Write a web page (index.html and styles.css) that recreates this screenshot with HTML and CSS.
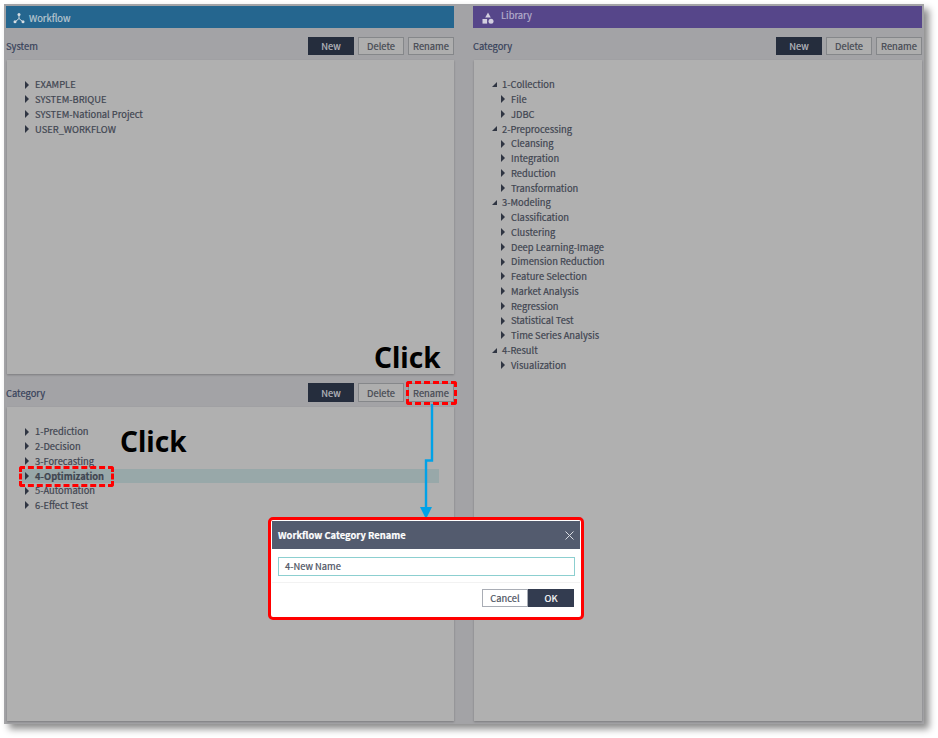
FILE: index.html
```
<!DOCTYPE html>
<html lang="en">
<head>
    <meta charset="UTF-8">
    <title>Workflow Category Rename</title>
    <link rel="stylesheet" href="styles.css">
</head>
<body>
    <div class="shell">
        <div class="column">
            <div class="title-bar workflow-bar">
                <svg class="title-icon" width="12" height="12" viewBox="0 0 12 12"><path d="M6 2.5V6.5L2 10M6 6.5L10 10" fill="none" stroke="#d5dde3" stroke-width="1"/><circle cx="6" cy="2.4" r="1.5" fill="#d5dde3"/><circle cx="2" cy="9.8" r="1.5" fill="#d5dde3"/><circle cx="10" cy="9.8" r="1.5" fill="#d5dde3"/></svg>
                <span>Workflow</span>
            </div>
            <div class="section-head">
                <span class="section-name">System</span>
                <button class="btn btn-dark">New</button>
                <button class="btn">Delete</button>
                <button class="btn">Rename</button>
            </div>
            <ul class="tree">
                <li class="row"><i class="arrow"></i>EXAMPLE</li>
                <li class="row"><i class="arrow"></i>SYSTEM-BRIQUE</li>
                <li class="row"><i class="arrow"></i>SYSTEM-National Project</li>
                <li class="row"><i class="arrow"></i>USER_WORKFLOW</li>
            </ul>
            <div class="section-head second">
                <span class="section-name">Category</span>
                <button class="btn btn-dark">New</button>
                <button class="btn">Delete</button>
                <button class="btn">Rename</button>
            </div>
            <ul class="tree">
                <li class="row"><i class="arrow"></i>1-Prediction</li>
                <li class="row"><i class="arrow"></i>2-Decision</li>
                <li class="row"><i class="arrow"></i>3-Forecasting</li>
                <li class="row selected"><i class="arrow"></i>4-Optimization</li>
                <li class="row"><i class="arrow"></i>5-Automation</li>
                <li class="row"><i class="arrow"></i>6-Effect Test</li>
            </ul>
        </div>

        <div class="column">
            <div class="title-bar library-bar">
                <svg class="title-icon" width="12" height="12" viewBox="0 0 12 12"><path d="M6 0.5L8.8 5.5H3.2Z" fill="#d3cfe0"/><rect x="0.5" y="7" width="4.6" height="4.6" fill="#d3cfe0"/><circle cx="9" cy="9.3" r="2.5" fill="#d3cfe0"/></svg>
                <span>Library</span>
            </div>
            <div class="section-head">
                <span class="section-name">Category</span>
                <button class="btn btn-dark">New</button>
                <button class="btn">Delete</button>
                <button class="btn">Rename</button>
            </div>
            <ul class="tree">
                <li class="row open"><i class="arrow-open"></i>1-Collection</li>
                <li class="row child"><i class="arrow"></i>File</li>
                <li class="row child"><i class="arrow"></i>JDBC</li>
                <li class="row open"><i class="arrow-open"></i>2-Preprocessing</li>
                <li class="row child"><i class="arrow"></i>Cleansing</li>
                <li class="row child"><i class="arrow"></i>Integration</li>
                <li class="row child"><i class="arrow"></i>Reduction</li>
                <li class="row child"><i class="arrow"></i>Transformation</li>
                <li class="row open"><i class="arrow-open"></i>3-Modeling</li>
                <li class="row child"><i class="arrow"></i>Classification</li>
                <li class="row child"><i class="arrow"></i>Clustering</li>
                <li class="row child"><i class="arrow"></i>Deep Learning-Image</li>
                <li class="row child"><i class="arrow"></i>Dimension Reduction</li>
                <li class="row child"><i class="arrow"></i>Feature Selection</li>
                <li class="row child"><i class="arrow"></i>Market Analysis</li>
                <li class="row child"><i class="arrow"></i>Regression</li>
                <li class="row child"><i class="arrow"></i>Statistical Test</li>
                <li class="row child"><i class="arrow"></i>Time Series Analysis</li>
                <li class="row open"><i class="arrow-open"></i>4-Result</li>
                <li class="row child"><i class="arrow"></i>Visualization</li>
            </ul>
        </div>
    </div>

    <!-- annotations drawn over the screen -->
    <div class="click-label click-rename">Click</div>
    <div class="click-label click-row">Click</div>
    <div class="dash-box dash-rename"></div>
    <div class="dash-box dash-row"></div>
    <svg class="connector" width="20" height="116" viewBox="0 0 20 116">
        <path d="M15 0V56.5H9V106" fill="none" stroke="#00a2e8" stroke-width="2.4"/>
        <path d="M3 103H15L9 115Z" fill="#00a2e8"/>
    </svg>

    <div class="modal">
        <div class="modal-head">
            <span>Workflow Category Rename</span>
            <svg width="9" height="9" viewBox="0 0 9 9"><path d="M0.5 0.5L8.5 8.5M8.5 0.5L0.5 8.5" stroke="#d9dce2" stroke-width="1"/></svg>
        </div>
        <div class="modal-body">
            <div class="modal-input">4-New Name</div>
        </div>
        <div class="modal-foot">
            <button class="modal-btn">Cancel</button>
            <button class="modal-btn modal-ok">OK</button>
        </div>
    </div>
</body>
</html>
```

FILE: styles.css
```
html, body {
    margin: 0;
    padding: 0;
}
body {
    width: 938px;
    height: 738px;
    overflow: hidden;
    background-color: #fff;
    font-family: "Noto Sans CJK KR", "Noto Sans", sans-serif;
    font-size: 9.35px;
    -webkit-text-stroke: 0.2px;
    color: #3f4550;
}
.shell {
    position: relative;
    margin: 4px 0 0 4px;
    width: 920px;
    height: 720px;
    box-sizing: border-box;
    padding: 2px 2px 3px 2px;
    display: flex;
    gap: 19px;
    background-color: #a3a3a6;
    box-shadow: 5px 5px 7px rgba(0, 0, 0, 0.45);
}
.column {
    width: 448px;
    display: flex;
    flex-direction: column;
}
.column + .column {
    width: 449px;
}
.title-bar {
    height: 22px;
    flex: none;
    box-sizing: border-box;
    display: flex;
    align-items: center;
    color: #b9c6d0;
}
.workflow-bar {
    background-color: #25668f;
    padding-left: 7px;
    gap: 4px;
    padding-top: 1px;
}
.library-bar {
    background-color: #56468a;
    color: #b5aecb;
    padding-left: 9px;
    padding-bottom: 5px;
    gap: 7px;
}
.title-icon {
    flex: none;
}
.library-bar .title-icon {
    margin-top: 7px;
}
.section-head {
    height: 18px;
    flex: none;
    margin: 9px 0 5px;
    display: flex;
    align-items: center;
    gap: 4px;
}
.section-head.second {
    margin: 9px 0 5px;
    height: 19px;
}
.section-name {
    flex: 1;
    color: #36415a;
}
.btn {
    width: 46px;
    height: 100%;
    padding: 0;
    box-sizing: border-box;
    border: 1px solid #85878a;
    background-color: #aeaeae;
    color: #444851;
    font-family: inherit;
    font-size: 9.35px;
}
.btn-dark {
    background-color: #252d3d;
    border-color: #252d3d;
    color: #b7b9bf;
}
.tree {
    flex: 1;
    list-style: none;
    margin: 0 0 0 1px;
    padding: 17.25px 15px 0 15px;
    background-color: #b0b0b0;
    box-shadow: 0 1px 2px rgba(0, 0, 0, 0.25);
}
.row {
    height: 14.75px;
    line-height: 14.75px;
    display: flex;
    align-items: center;
    padding-left: 3px;
    white-space: nowrap;
}
.row.open {
    padding-left: 3px;
}
.row.child {
    padding-left: 12px;
}
.selected {
    background-color: #98a8a9;
    font-weight: 700;
}
.arrow {
    width: 0;
    height: 0;
    flex: none;
    margin-right: 6px;
    border-left: 4px solid #2f3542;
    border-top: 4px solid transparent;
    border-bottom: 4px solid transparent;
}
.arrow-open {
    width: 0;
    height: 0;
    flex: none;
    margin-right: 5px;
    border-right: 5px solid #2f3542;
    border-top: 5px solid transparent;
}
.click-label {
    position: absolute;
    font-family: "Noto Sans", sans-serif;
    font-weight: 700;
    font-size: 28px;
    line-height: 32px;
    color: #000;
    -webkit-text-stroke: 0;
}
.click-rename {
    left: 374px;
    top: 341px;
}
.click-row {
    left: 120px;
    top: 425px;
}
.dash-box {
    position: absolute;
    box-sizing: border-box;
    border: 3px dashed #f00;
    border-radius: 3px;
}
.dash-rename {
    left: 406px;
    top: 381px;
    width: 51px;
    height: 24px;
}
.dash-row {
    left: 19px;
    top: 466px;
    width: 95px;
    height: 21px;
}
.connector {
    position: absolute;
    left: 417px;
    top: 404px;
}
.modal {
    position: absolute;
    left: 268px;
    top: 517px;
    width: 316px;
    height: 103px;
    box-sizing: border-box;
    border: 3px solid #f00;
    border-radius: 5px;
    background-color: #fff;
    padding: 1px;
    color: #4b5160;
}
.modal-head {
    height: 28px;
    box-sizing: border-box;
    padding: 0 6px;
    display: flex;
    align-items: center;
    justify-content: space-between;
    background-color: #535b6e;
    color: #fff;
    font-weight: 700;
}
.modal-body {
    height: 34px;
    box-sizing: border-box;
    padding: 8px 5px 0 6px;
    border-bottom: 1px solid #f2f2f2;
}
.modal-input {
    height: 19px;
    line-height: 17px;
    box-sizing: border-box;
    border: 1px solid #8ccfd0;
    padding-left: 6px;
}
.modal-foot {
    display: flex;
    justify-content: flex-end;
    padding: 6px 6px 0 0;
}
.modal-btn {
    width: 46px;
    height: 18px;
    padding: 0;
    box-sizing: border-box;
    border: 1px solid #a9adb5;
    background-color: #fff;
    color: #4b5160;
    font-family: inherit;
    font-size: 9.35px;
}
.modal-ok {
    background-color: #333c50;
    border-color: #333c50;
    color: #fff;
}
```
